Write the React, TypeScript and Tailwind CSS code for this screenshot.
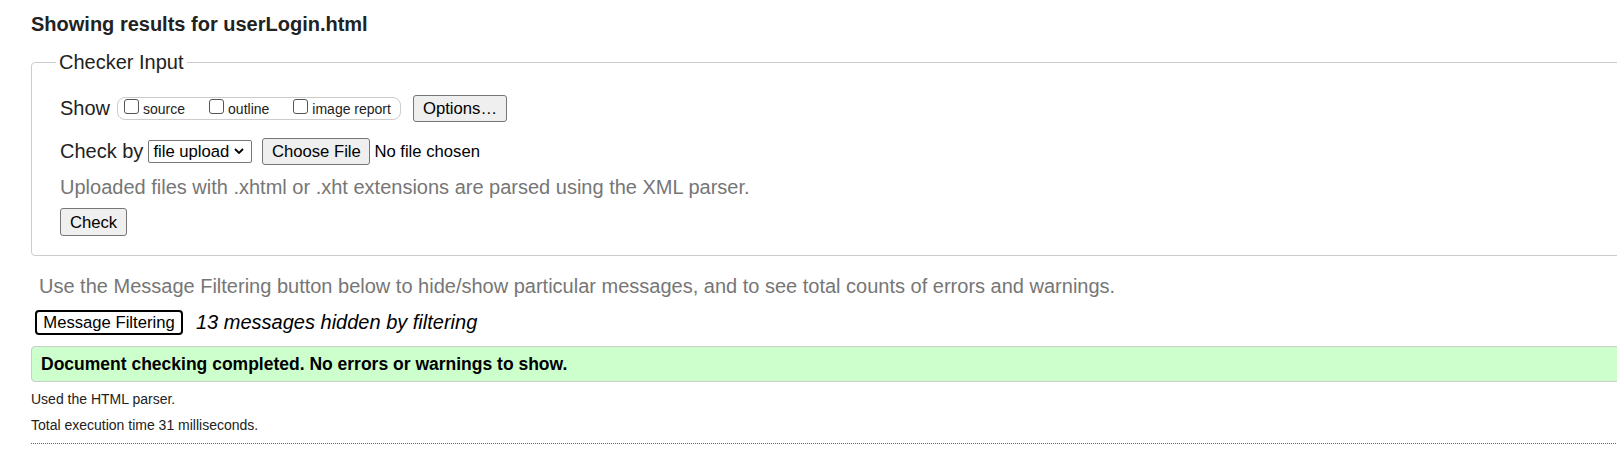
import { useState } from "react";

const FONT = "font-['Liberation_Sans',Arial,sans-serif]";

function Box({ label }: { label: string }) {
  return (
    <label className="flex items-start">
      <span className="mt-[1px] h-[15px] w-[15px] shrink-0 rounded-[3px] border border-[#555] bg-white" />
      <span className="ml-[4px] mt-[3px] whitespace-nowrap text-[14px] leading-[16px] text-[#222]">{label}</span>
    </label>
  );
}

function NativeButton({ children, className = "" }: { children: React.ReactNode; className?: string }) {
  return (
    <button
      type="button"
      className={`whitespace-nowrap rounded-[3px] border border-[#767676] bg-[#efefef] text-[16.67px] leading-[19px] text-black ${className}`}
    >
      {children}
    </button>
  );
}

export default function App() {
  const [filtered] = useState(13);

  return (
    <div className={`h-[470px] w-full overflow-hidden bg-white ${FONT} text-[#222]`}>
      <div className="w-[1700px] pl-[31px]">
        <h2 className="pt-[13px] text-[20px] font-bold leading-[23px] text-[#222]">
          Showing results for userLogin.html
        </h2>

        <fieldset className="mt-[15px] rounded-[4px] border border-[#ccc] pb-[19px]">
          <legend className="ml-[24px] px-[3px] text-[20px] leading-[23px] text-[#222]">Checker Input</legend>

          <div className="pl-[28px]">
            <div className="mt-[20px] flex h-[28px] items-center">
              <span className="text-[20px] leading-[23px]">Show</span>
              <div className="ml-[7px] flex h-[23px] w-[284px] items-start gap-[24px] rounded-[8px] border border-[#ccc] pl-[6px]">
                <Box label="source" />
                <Box label="outline" />
                <Box label="image report" />
              </div>
              <NativeButton className="ml-[12px] h-[27px] w-[94px]">Options…</NativeButton>
            </div>

            <div className="mt-[16px] flex h-[26px] items-center">
              <span className="text-[20px] leading-[23px]">Check by</span>
              <div className="ml-[5px] flex h-[23px] w-[104px] items-center rounded-[2px] border border-[#767676] bg-white pl-[4px] text-[16.67px] leading-[19px] text-black">
                <span className="whitespace-nowrap">file upload</span>
                <svg viewBox="0 0 10 6" className="ml-[5px] h-[6px] w-[10px]" fill="none" stroke="#000" strokeWidth="1.8">
                  <path d="M1 1l4 4 4-4" />
                </svg>
              </div>
              <NativeButton className="ml-[10px] h-[27px] w-[108px]">Choose File</NativeButton>
              <span className="ml-[4px] whitespace-nowrap text-[16.67px] leading-[19px] text-black">No file chosen</span>
            </div>

            <p className="mt-[12px] text-[20px] leading-[23px] text-[#767676]">
              Uploaded files with .xhtml or .xht extensions are parsed using the XML parser.
            </p>

            <NativeButton className="mt-[9px] h-[28px] w-[67px]">Check</NativeButton>
          </div>
        </fieldset>

        <p className="ml-[8px] mt-[19px] text-[20px] leading-[23px] text-[#767676]">
          Use the Message Filtering button below to hide/show particular messages, and to see total counts of errors and warnings.
        </p>

        <div className="mt-[12px] flex items-center">
          <button
            type="button"
            className="ml-[4px] h-[25px] w-[148px] rounded-[4px] border-2 border-black bg-white text-[16.67px] leading-[19px] text-black"
          >
            Message Filtering
          </button>
          <span className="ml-[13px] text-[20px] italic leading-[23px] text-black">
            {filtered} messages hidden by filtering
          </span>
        </div>

        <div className="mt-[11px] flex h-[36px] items-center rounded-[4px] border border-[#ccc] bg-[#ccffcc] pl-[9px]">
          <p className="text-[17.5px] font-bold leading-[20px] text-black">
            Document checking completed. No errors or warnings to show.
          </p>
        </div>

        <p className="mt-[9px] text-[14px] leading-[16px] text-[#222]">Used the HTML parser.</p>
        <p className="mt-[10px] text-[14px] leading-[16px] text-[#222]">Total execution time 31 milliseconds.</p>

        <div className="mt-[10px] border-t border-dotted border-[#666]" />
      </div>
    </div>
  );
}
